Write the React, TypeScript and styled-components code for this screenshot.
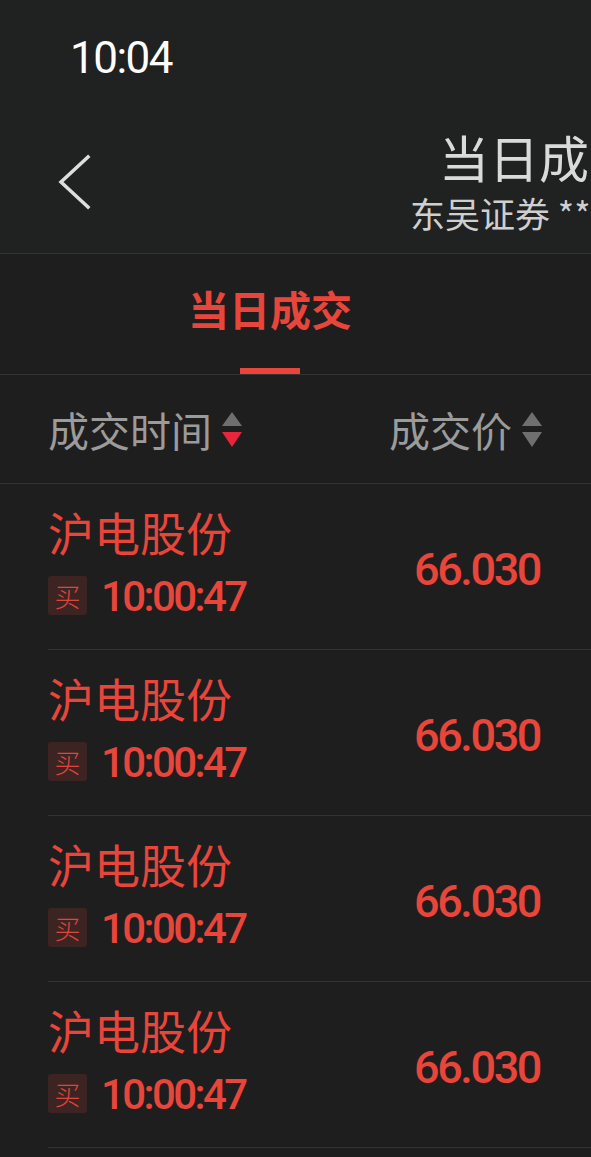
import React from 'react';
import styled, { createGlobalStyle } from 'styled-components';

const RED = '#e8453b';
const CJK = '"Noto Sans CJK SC", "Noto Sans", sans-serif';
const DIGITS = 'Roboto, "Noto Sans", sans-serif';

const GlobalStyle = createGlobalStyle`
  html, body {
    margin: 0;
    padding: 0;
    background: #1e1e1e;
  }
  #root {
    width: 591px;
    height: 1157px;
    overflow: hidden;
  }
`;

const Page = styled.div`
  display: flex;
  flex-direction: column;
  width: 591px;
  min-height: 1157px;
  background: #1e1e1e;
  font-family: ${CJK};
`;

const StatusBar = styled.div`
  height: 110px;
  box-sizing: border-box;
  padding: 36px 0 0 70px;
  background: #202121;
`;

const Clock = styled.span`
  font-family: ${DIGITS};
  font-size: 44px;
  line-height: 44px;
  letter-spacing: -1.5px;
  color: #ffffff;
`;

const NavBar = styled.div`
  display: flex;
  align-items: center;
  height: 144px;
  box-sizing: border-box;
  background: #202121;
  border-bottom: 1px solid #333333;
  overflow: hidden;
`;

const BackIcon = styled.svg`
  flex: 0 0 auto;
  margin-left: 58px;
`;

const TitleBlock = styled.div`
  display: flex;
  flex-direction: column;
  gap: 11px;
  margin-left: 318px;
  white-space: nowrap;
`;

const Title = styled.div`
  padding-left: 29px;
  font-size: 50px;
  line-height: 52px;
  color: #dadada;
`;

const Subtitle = styled.div`
  font-size: 35px;
  line-height: 40px;
  color: #cfcfcf;
`;

const TabBar = styled.div`
  display: flex;
  height: 121px;
  box-sizing: border-box;
  padding-left: 188px;
  border-bottom: 1px solid #333333;
`;

const Tab = styled.div<{ $active?: boolean }>`
  display: flex;
  flex-direction: column;
  align-items: center;
  justify-content: space-between;
  padding-top: 30px;
  font-size: 41px;
  font-weight: 700;
  line-height: 48px;
  color: ${({ $active }) => ($active ? RED : '#9b9b9b')};
`;

const TabLine = styled.div`
  width: 60px;
  height: 6px;
  background: ${RED};
`;

const ColumnHeader = styled.div`
  display: flex;
  align-items: center;
  justify-content: space-between;
  height: 109px;
  box-sizing: border-box;
  padding: 0 49px 0 48px;
  border-bottom: 1px solid #333333;
`;

const HeaderCell = styled.div`
  display: flex;
  align-items: center;
  gap: 10px;
  font-size: 41px;
  line-height: 48px;
  color: #9b9b9b;
`;

const Row = styled.div`
  display: flex;
  align-items: center;
  justify-content: space-between;
  height: 166px;
  box-sizing: border-box;
  margin-left: 48px;
  padding-right: 51px;
  border-bottom: 1px solid #333333;
`;

const StockInfo = styled.div`
  display: flex;
  flex-direction: column;
  gap: 18px;
  padding-bottom: 10px;
`;

const StockName = styled.div`
  font-size: 46px;
  line-height: 50px;
  color: ${RED};
`;

const TradeLine = styled.div`
  display: flex;
  align-items: center;
  gap: 14px;
`;

const SideBadge = styled.span`
  display: flex;
  align-items: center;
  justify-content: center;
  width: 39px;
  height: 39px;
  border-radius: 3px;
  background: #3b2422;
  font-size: 26px;
  font-weight: 300;
  color: #e0453c;
`;

const TradeTime = styled.span`
  padding-top: 2px;
  font-family: ${DIGITS};
  font-size: 42px;
  font-weight: 500;
  line-height: 42px;
  letter-spacing: -2.6px;
  color: ${RED};
`;

const Price = styled.div`
  padding-top: 6px;
  font-family: ${DIGITS};
  font-size: 45px;
  font-weight: 500;
  line-height: 45px;
  letter-spacing: -2.4px;
  color: ${RED};
`;

const SortArrows = ({ active }: { active?: 'up' | 'down' }) => (
  <svg width="20" height="35" viewBox="0 0 20 35">
    <polygon points="10,0 20,14 0,14" fill={active === 'up' ? '#e8253a' : '#6f6f6f'} />
    <polygon points="0,20 20,20 10,35" fill={active === 'down' ? '#e8253a' : '#6f6f6f'} />
  </svg>
);

const trades = [
  { name: '沪电股份', side: '买', time: '10:00:47', price: '66.030' },
  { name: '沪电股份', side: '买', time: '10:00:47', price: '66.030' },
  { name: '沪电股份', side: '买', time: '10:00:47', price: '66.030' },
  { name: '沪电股份', side: '买', time: '10:00:47', price: '66.030' },
];

const App = () => (
  <>
    <GlobalStyle />
    <Page>
      <StatusBar>
        <Clock>10:04</Clock>
      </StatusBar>
      <NavBar>
        <BackIcon width="34" height="56" viewBox="0 0 34 56">
          <polyline
            points="30,3 3,28 30,53"
            fill="none"
            stroke="#dedede"
            strokeWidth="3.5"
            strokeLinecap="square"
          />
        </BackIcon>
        <TitleBlock>
          <Title>当日成交</Title>
          <Subtitle>东吴证券 ****</Subtitle>
        </TitleBlock>
      </NavBar>
      <TabBar>
        <Tab $active>
          当日成交
          <TabLine />
        </Tab>
      </TabBar>
      <ColumnHeader>
        <HeaderCell>
          成交时间
          <SortArrows active="down" />
        </HeaderCell>
        <HeaderCell>
          成交价
          <SortArrows />
        </HeaderCell>
      </ColumnHeader>
      {trades.map((t, i) => (
        <Row key={i}>
          <StockInfo>
            <StockName>{t.name}</StockName>
            <TradeLine>
              <SideBadge>{t.side}</SideBadge>
              <TradeTime>{t.time}</TradeTime>
            </TradeLine>
          </StockInfo>
          <Price>{t.price}</Price>
        </Row>
      ))}
    </Page>
  </>
);

export default App;
